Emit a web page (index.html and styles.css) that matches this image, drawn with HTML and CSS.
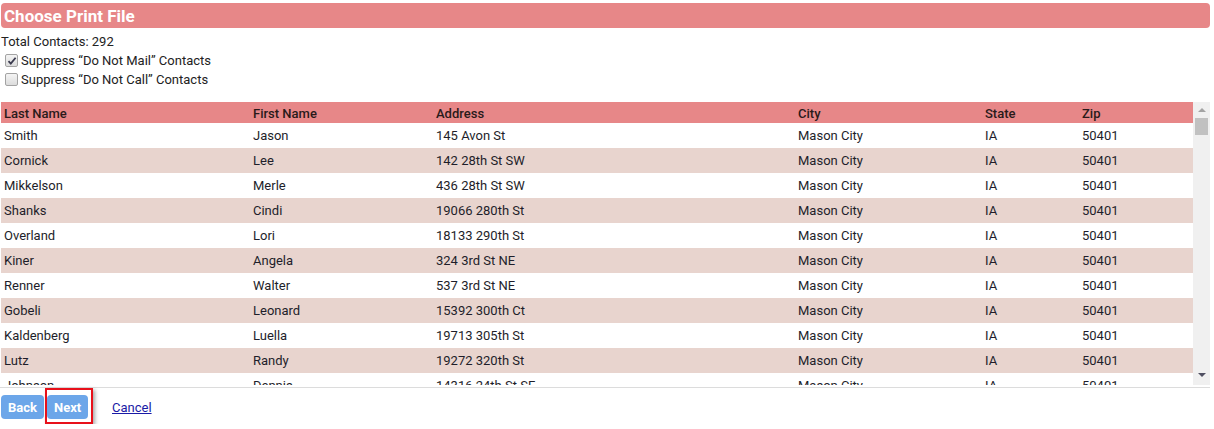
FILE: index.html
```html
<!DOCTYPE html>
<html>
<head>
<meta charset="utf-8">
<link rel="stylesheet" href="styles.css">
</head>
<body>
<div class="page">
  <div class="title">Choose Print File</div>
  <div class="line total">Total Contacts: 292</div>
  <label class="line check"><span class="box checked"><svg width="10" height="10" viewBox="0 0 10 10"><path d="M1.5 5.2 L3.8 7.6 L8.6 1.8" fill="none" stroke="#3b3b4f" stroke-width="1.8"/></svg></span>Suppress “Do Not Mail” Contacts</label>
  <label class="line check"><span class="box"></span>Suppress “Do Not Call” Contacts</label>

  <div class="grid">
    <div class="tablewrap">
      <table>
        <colgroup>
          <col class="c1"><col class="c2"><col class="c3"><col class="c4"><col class="c5"><col class="c6">
        </colgroup>
        <thead>
          <tr><th>Last Name</th><th>First Name</th><th>Address</th><th>City</th><th>State</th><th>Zip</th></tr>
        </thead>
        <tbody>
          <tr><td>Smith</td><td>Jason</td><td>145 Avon St</td><td>Mason City</td><td>IA</td><td>50401</td></tr>
          <tr><td>Cornick</td><td>Lee</td><td>142 28th St SW</td><td>Mason City</td><td>IA</td><td>50401</td></tr>
          <tr><td>Mikkelson</td><td>Merle</td><td>436 28th St SW</td><td>Mason City</td><td>IA</td><td>50401</td></tr>
          <tr><td>Shanks</td><td>Cindi</td><td>19066 280th St</td><td>Mason City</td><td>IA</td><td>50401</td></tr>
          <tr><td>Overland</td><td>Lori</td><td>18133 290th St</td><td>Mason City</td><td>IA</td><td>50401</td></tr>
          <tr><td>Kiner</td><td>Angela</td><td>324 3rd St NE</td><td>Mason City</td><td>IA</td><td>50401</td></tr>
          <tr><td>Renner</td><td>Walter</td><td>537 3rd St NE</td><td>Mason City</td><td>IA</td><td>50401</td></tr>
          <tr><td>Gobeli</td><td>Leonard</td><td>15392 300th Ct</td><td>Mason City</td><td>IA</td><td>50401</td></tr>
          <tr><td>Kaldenberg</td><td>Luella</td><td>19713 305th St</td><td>Mason City</td><td>IA</td><td>50401</td></tr>
          <tr><td>Lutz</td><td>Randy</td><td>19272 320th St</td><td>Mason City</td><td>IA</td><td>50401</td></tr>
          <tr><td>Johnson</td><td>Dennis</td><td>14316 24th St SE</td><td>Mason City</td><td>IA</td><td>50401</td></tr>
        </tbody>
      </table>
    </div>
    <div class="scrollbar">
      <div class="arrow up"></div>
      <div class="thumb"></div>
      <div class="spacer"></div>
      <div class="arrow down"></div>
    </div>
  </div>

  <div class="actions">
    <button class="btn">Back</button>
    <div class="highlight"><button class="btn">Next</button></div>
    <a class="cancel" href="#">Cancel</a>
  </div>
</div>
</body>
</html>
```
FILE: styles.css
```css
html, body {
  margin: 0;
  padding: 0;
  background: #fff;
}
body {
  font-family: Roboto, "Liberation Sans", Arial, sans-serif;
  font-size: 13px;
  color: #222;
}
.page {
  padding: 3px 4px 0 1px;
}
.title {
  height: 25px;
  line-height: 26px;
  background: #e78788;
  border-radius: 4px;
  color: #fff;
  font-weight: 700;
  font-size: 17px;
  padding-left: 3px;
}
.line {
  display: flex;
  align-items: center;
  height: 19px;
}
.total {
  margin-top: 4px;
  padding-left: 0;
}
.check {
  padding-left: 4px;
}
.box {
  width: 11px;
  height: 11px;
  border: 1px solid #a3a3a3;
  border-radius: 2px;
  background: linear-gradient(#f4f4f4, #dcdcdc);
  margin-right: 3px;
  display: flex;
  align-items: center;
  justify-content: center;
}
.box svg {
  display: block;
}
.grid {
  margin-top: 13px;
  display: flex;
  padding-bottom: 2px;
  border-bottom: 1px solid #dcdcdc;
  margin-left: -1px;
  padding-left: 1px;
}
.tablewrap {
  flex: 1;
  height: 283px;
  overflow: hidden;
}
table {
  border-collapse: collapse;
  table-layout: fixed;
  width: 1192px;
}
col.c1 { width: 249px; }
col.c2 { width: 183px; }
col.c3 { width: 362px; }
col.c4 { width: 187px; }
col.c5 { width: 97px; }
col.c6 { width: 114px; }
th {
  background: #e78788;
  height: 21px;
  padding: 1px 0 0 3px;
  text-align: left;
  font-weight: 500;
  color: #2a1a1a;
  box-sizing: border-box;
}
td {
  height: 25px;
  padding: 0 0 0 3px;
  box-sizing: border-box;
  white-space: nowrap;
  color: #1e1e2a;
}
tbody tr:nth-child(even) td {
  background: #e8d4ce;
}
.scrollbar {
  width: 17px;
  height: 283px;
  background: #f0f0f0;
  display: flex;
  flex-direction: column;
  align-items: center;
}
.arrow {
  width: 0;
  height: 0;
  border-left: 4px solid transparent;
  border-right: 4px solid transparent;
}
.arrow.up {
  margin-top: 6px;
  border-bottom: 4px solid #a3a3a3;
}
.arrow.down {
  margin-bottom: 8px;
  border-top: 4px solid #505062;
}
.thumb {
  margin-top: 6px;
  width: 13px;
  height: 17px;
  background: #c1c1c1;
}
.spacer {
  flex: 1;
}
.actions {
  display: flex;
  align-items: flex-start;
}
.btn {
  margin-top: 7px;
  height: 24px;
  padding: 0 7px;
  border: none;
  border-radius: 4px;
  background: #6ca6e9;
  color: #fff;
  font-family: Roboto, "Liberation Sans", Arial, sans-serif;
  font-size: 13px;
  font-weight: 700;
  width: 43px;
}
.highlight {
  margin-left: 1px;
  border: 2px solid #e8101a;
  padding: 5px 3px 3px 0;
  box-shadow: 2px 2px 4px rgba(0, 0, 0, 0.35);
}
.highlight .btn {
  margin-top: 0;
  width: 41px;
}
.cancel {
  margin-left: 19px;
  margin-top: 12px;
  color: #1a1aa6;
  text-decoration: underline;
  line-height: 16px;
}
```
